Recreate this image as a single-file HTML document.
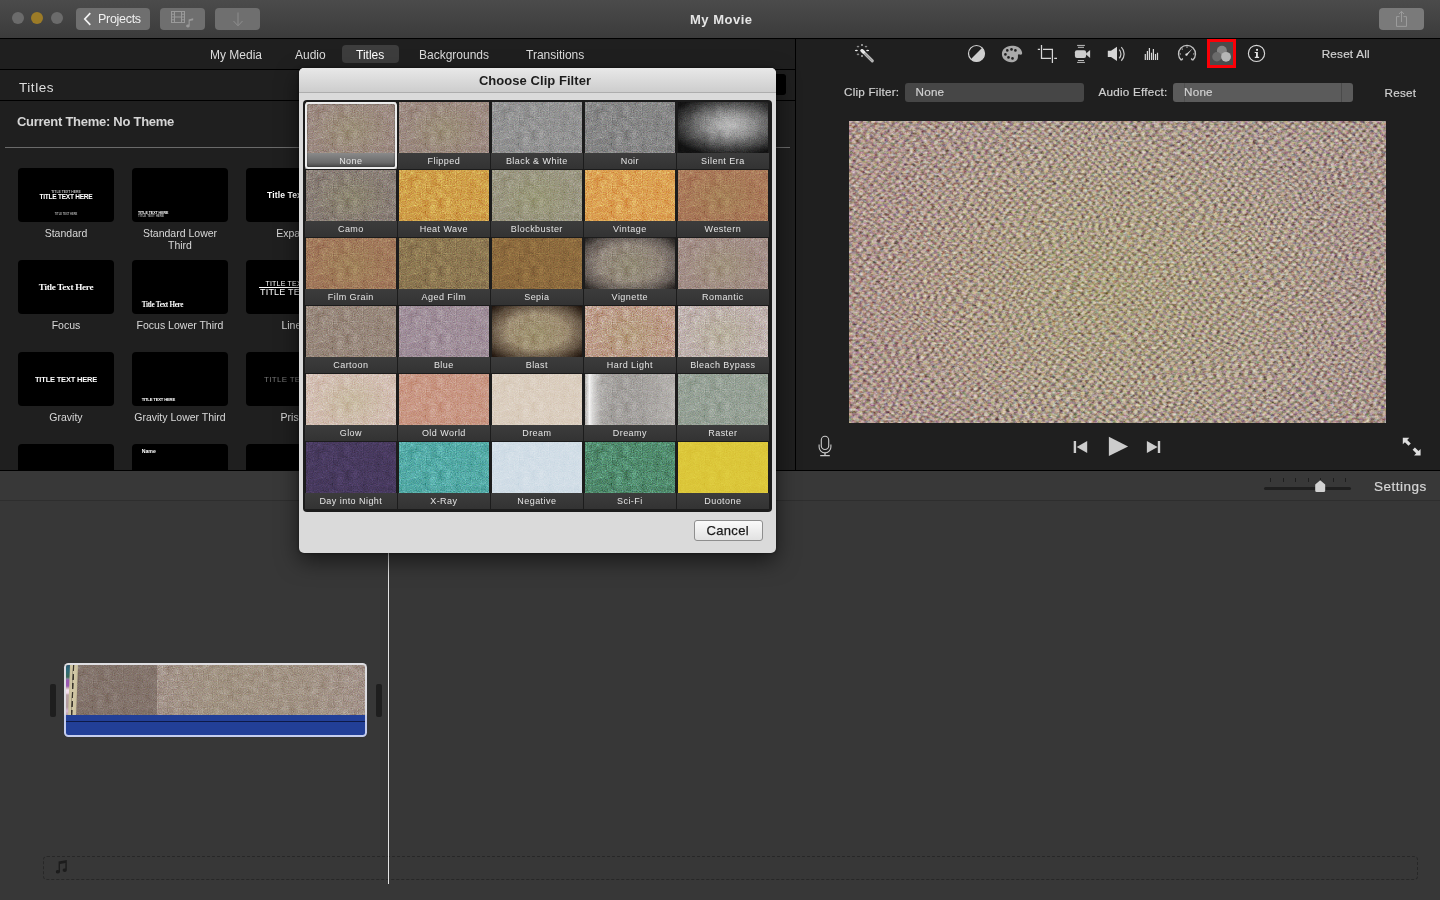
<!DOCTYPE html>
<html><head><meta charset="utf-8">
<style>
*{box-sizing:border-box;margin:0;padding:0}
html,body{width:1440px;height:900px;overflow:hidden;background:#373737;font-family:"Liberation Sans",sans-serif;}
.abs{position:absolute}
#titlebar{left:0;top:0;width:1440px;height:38px;background:linear-gradient(#4b4b4b,#3b3b3b);}
.hl{left:0;height:1px;background:#000}
.tl{border-radius:50%;width:12px;height:12px;top:12px;background:#6b6b6b}
.tbtn{top:8px;height:22px;background:#6f6f6f;border-radius:4px}
#upper{left:0;top:39px;width:1440px;height:431px;background:#1f1f1f}
.tab{top:48px;font-size:12px;color:#dcdcdc;white-space:nowrap}
.lbl{font-size:10.5px;color:#d8d8d8;text-align:center;line-height:12px;white-space:nowrap}
.thumb{width:96px;height:54px;background:#000;border-radius:4px;overflow:hidden}
.thumb span{position:absolute;color:#fff;white-space:nowrap;line-height:1}
.vt{font-size:11.700px;color:#d0d0d0;white-space:nowrap;letter-spacing:.22px;-webkit-text-stroke:.2px #d0d0d0;margin-top:-1.300px}
svg{position:absolute;overflow:visible}
/* dialog */
#dlg{left:299px;top:68px;width:477px;height:485px;background:#dadada;border-radius:5px;box-shadow:0 8px 22px rgba(0,0,0,.55),0 0 3px rgba(0,0,0,.5);}
#dlghead{left:0;top:0;width:477px;height:25px;border-radius:5px 5px 0 0;background:linear-gradient(#e8e8e8,#cdcdcd);border-bottom:1px solid #adadad}
#dlgtitle{left:0;top:5px;width:472px;text-align:center;font-size:13px;font-weight:bold;color:#1c1c1c;letter-spacing:.05px}
#grid{left:4px;top:32px;width:469px;height:412px;background:#1c1c1c;border-radius:4px}
.cell{position:absolute;width:91.700px;height:67px}
.im{position:absolute;left:.600px;top:0;width:90.400px;height:51px;overflow:hidden}
.tx{position:absolute;left:0;top:0;width:100%;height:100%;filter:url(#fabS);mix-blend-mode:overlay}
#vtx{filter:url(#fab);mix-blend-mode:overlay}
.txh{filter:url(#fabH)}
.ov{position:absolute;left:0;top:0;width:100%;height:100%}
.cl{will-change:transform;position:absolute;left:0;top:51px;width:91.700px;height:16px;background:linear-gradient(#3c3c3c,#333);text-align:center;font-size:9px;color:#e4e4e4;letter-spacing:.45px;line-height:16.5px;white-space:nowrap}
.cell.sel{outline:none}
.cell.sel .cl{background:linear-gradient(#8a8a8a 0%,#6a6a6a 60%,#4a4a4a 85%,#777 100%)}
.cell.sel:after{content:"";box-sizing:border-box;position:absolute;left:-0.5px;top:0;width:92px;height:66.5px;border:2px solid #ececec;border-radius:3.5px;box-shadow:inset 0 0 1.5px #222;z-index:3}
#cancel{left:395px;top:452px;width:69px;height:21px;border:1px solid #8e8e8e;border-radius:3px;background:linear-gradient(#fafafa,#e2e2e2);font-size:13px;color:#1a1a1a;text-align:center;line-height:19px;letter-spacing:.3px;padding-right:1.500px;-webkit-text-stroke:.25px #1a1a1a}
</style></head><body>

<svg width="0" height="0" style="position:absolute">
<defs>
<filter id="fab" x="0" y="0" width="100%" height="100%" color-interpolation-filters="sRGB">
  <feTurbulence type="fractalNoise" baseFrequency="0.28 0.42" numOctaves="2" seed="7"/>
  <feColorMatrix type="matrix" values="0.62 0.29 0.29 0 -0.1  0.29 0.62 0.29 0 -0.1  0.29 0.29 0.62 0 -0.1  0 0 0 0 1"/>
</filter>
<filter id="fabS" x="0" y="0" width="100%" height="100%" color-interpolation-filters="sRGB">
  <feTurbulence type="fractalNoise" baseFrequency="0.8 0.85" numOctaves="1" seed="11" result="a"/>
  <feTurbulence type="fractalNoise" baseFrequency="0.13 0.16" numOctaves="2" seed="5" result="b0"/><feColorMatrix in="b0" type="matrix" values="0.34 0.33 0.33 0 0 0.34 0.33 0.33 0 0 0.34 0.33 0.33 0 0 0 0 0 0 1" result="b"/>
  <feComposite in="a" in2="b" operator="arithmetic" k1="0" k2="0.8" k3="0.2" k4="0"/>
  <feColorMatrix type="matrix" values="0.5 0.25 0.25 0 0  0.25 0.5 0.25 0 0  0.25 0.25 0.5 0 0  0 0 0 0 1"/>
</filter>
<filter id="fabH" x="0" y="0" width="100%" height="100%" color-interpolation-filters="sRGB">
  <feTurbulence type="fractalNoise" baseFrequency="0.8 0.85" numOctaves="1" seed="11" result="a"/>
  <feTurbulence type="fractalNoise" baseFrequency="0.13 0.16" numOctaves="2" seed="5" result="b0"/><feColorMatrix in="b0" type="matrix" values="0.34 0.33 0.33 0 0 0.34 0.33 0.33 0 0 0.34 0.33 0.33 0 0 0 0 0 0 1" result="b"/>
  <feComposite in="a" in2="b" operator="arithmetic" k1="0" k2="0.8" k3="0.2" k4="0"/>
  <feColorMatrix type="matrix" values="0.9 0.4 0.4 0 -0.35  0.4 0.9 0.4 0 -0.35  0.4 0.4 0.9 0 -0.35  0 0 0 0 1"/>
</filter>
<filter id="soft" x="0" y="0" width="100%" height="100%"><feTurbulence type="fractalNoise" baseFrequency="0.012 0.02" numOctaves="2" seed="4" result="w"/><feDisplacementMap in="SourceGraphic" in2="w" scale="26" xChannelSelector="R" yChannelSelector="G" result="d"/><feGaussianBlur in="d" stdDeviation="0.75"/></filter>
<pattern id="weave" width="8.6" height="9.4" patternUnits="userSpaceOnUse" patternTransform="rotate(-3)">
  <rect width="8.6" height="9.4" fill="#a29285"/>
  <ellipse cx="2.15" cy="2.35" rx="2.2" ry="1.9" fill="#cdbea2"/>
  <ellipse cx="6.45" cy="7.05" rx="2.2" ry="1.9" fill="#cdbea2"/>
  <ellipse cx="6.45" cy="2.35" rx="1.7" ry="1.4" fill="#83756f"/>
  <ellipse cx="2.15" cy="7.05" rx="1.7" ry="1.4" fill="#83756f"/>
</pattern>
</defs></svg>
<!-- TITLE BAR -->
<div id="titlebar" class="abs"></div>
<div class="abs hl" style="top:38px;width:1440px"></div>
<div class="abs tl" style="left:12px"></div>
<div class="abs tl" style="left:31px;background:#9c7b27"></div>
<div class="abs tl" style="left:51px"></div>
<div class="abs tbtn" style="left:76px;width:74px"></div>
<div class="abs tbtn" style="left:160px;width:45px"></div>
<div class="abs tbtn" style="left:215px;width:45px"></div>
<div class="abs tbtn" style="left:1379px;width:45px;background:#7a7a7a"></div>
<svg class="abs" style="left:83px;top:12px" width="10" height="14" viewBox="0 0 10 14"><path d="M7.3 1.2 L1.8 7 L7.3 12.8" fill="none" stroke="#f2f2f2" stroke-width="1.7"/></svg>
<div class="abs" id="projects" style="left:98px;top:12px;font-size:12.5px;color:#f0f0f0;letter-spacing:-.3px">Projects</div>
<!-- film+note icon -->
<svg class="abs" style="left:170px;top:10px" width="26" height="20" viewBox="0 0 26 20"><g fill="none" stroke="#9a9a9a" stroke-width="1"><rect x="1.5" y="1.5" width="13" height="11"/><path d="M4.5 1.5V12.5M11.5 1.5V12.5M4.5 7H11.5M1.5 4.2H4.5M1.5 7H4.5M1.5 9.8H4.5M11.5 4.2H14.5M11.5 7H14.5M11.5 9.8H14.5"/></g><path d="M18.6 9.5 L23.2 8.3 V10.2 L19.7 11.1 V16 a1.8 1.5 0 1 1 -1.1 -1.4 Z" fill="#9a9a9a"/></svg>
<!-- down arrow -->
<svg class="abs" style="left:232px;top:12px" width="12" height="16" viewBox="0 0 12 16"><path d="M6 0.5V13.5M1.5 9L6 13.8L10.5 9" fill="none" stroke="#8e8e8e" stroke-width="1"/></svg>
<!-- share -->
<svg class="abs" style="left:1394px;top:10px" width="16" height="18" viewBox="0 0 16 18"><path d="M5.5 6.6H2.5V16.4H12.5V6.6H9.5M7.5 12V1.5M5 4L7.5 1.3L10 4" fill="none" stroke="#9c9c9c" stroke-width="1"/></svg>
<div class="abs" id="mymovie" style="left:690px;top:12px;font-size:13px;font-weight:bold;color:#e6e6e6;white-space:nowrap;letter-spacing:.5px">My Movie</div>

<!-- UPPER -->
<div id="upper" class="abs"></div>
<div class="abs hl" style="top:470px;width:1440px"></div>
<div class="abs hl" style="top:69px;width:795px"></div>
<div class="abs hl" style="top:100px;width:795px"></div>
<div class="abs" style="left:795px;top:39px;width:1px;height:431px;background:#000"></div>
<div class="abs" style="left:342px;top:45px;width:57px;height:18px;border-radius:4px;background:#3d3d3d"></div>
<div class="abs tab" id="t1" style="left:210px">My Media</div>
<div class="abs tab" id="t2" style="left:295px">Audio</div>
<div class="abs tab" id="t3" style="left:356px;color:#fff">Titles</div>
<div class="abs tab" id="t4" style="left:419px">Backgrounds</div>
<div class="abs tab" id="t5" style="left:526px">Transitions</div>
<div class="abs" id="titlesH" style="left:19px;top:80px;font-size:13.5px;color:#dedede;letter-spacing:.55px">Titles</div>
<div class="abs" style="left:700px;top:74px;width:86px;height:21px;background:#000;border-radius:3px"></div>
<div class="abs" id="curtheme" style="left:17px;top:114px;font-size:13px;font-weight:bold;color:#d6d6d6;white-space:nowrap;letter-spacing:-.27px">Current Theme: No Theme</div>
<div class="abs" style="left:5px;top:147px;width:785px;height:1px;background:#6a6a6a"></div>
<div class="abs thumb" style="left:18px;top:168px"><span style="left:0;width:96px;text-align:center;top:23.1px;font-size:3.4px;font-weight:bold;color:#bbb">TITLE TEXT HERE</span><span style="left:0;width:96px;text-align:center;top:26.1px;font-size:6.6px;font-weight:bold;letter-spacing:-.28px">TITLE TEXT HERE</span><span style="left:0;width:96px;text-align:center;top:46px;font-size:2.6px;font-weight:bold;color:#aaa">TITLE TEXT HERE</span></div>
<div class="abs lbl" style="left:6px;top:227px;width:120px">Standard</div>
<div class="abs thumb" style="left:132px;top:168px"><span style="left:6px;top:43.5px;font-size:3.5px;font-weight:bold">TITLE TEXT HERE</span><span style="left:6px;top:46.6px;font-size:3px;font-weight:bold;color:#aaa">TITLE TEXT HERE</span></div>
<div class="abs lbl" style="left:120px;top:227px;width:120px">Standard Lower<br>Third</div>
<div class="abs thumb" style="left:246px;top:168px"><span style="left:21px;top:23px;font-size:8.6px;font-weight:bold;letter-spacing:.1px">Title Text Here</span></div>
<div class="abs lbl" style="left:234px;top:227px;width:120px">Expand</div>
<div class="abs thumb" style="left:18px;top:260px"><span style="left:0;width:96px;text-align:center;top:22.6px;font-size:9.2px;font-weight:bold;font-family:'Liberation Serif',serif;letter-spacing:-.3px">Title Text Here</span></div>
<div class="abs lbl" style="left:6px;top:319px;width:120px">Focus</div>
<div class="abs thumb" style="left:132px;top:260px"><span style="left:9.7px;top:42.2px;font-size:7.2px;font-weight:bold;font-family:'Liberation Serif',serif;letter-spacing:-.3px">Title Text Here</span></div>
<div class="abs lbl" style="left:120px;top:319px;width:120px">Focus Lower Third</div>
<div class="abs thumb" style="left:246px;top:260px"><span style="left:19.5px;top:19.7px;font-size:7px;letter-spacing:.2px">TITLE TEXT HERE</span><span style="left:13px;top:27px;width:80px;height:1px;background:#fff"></span><span style="left:14px;top:27.6px;font-size:9px;letter-spacing:.2px">TITLE TEXT HERE</span></div>
<div class="abs lbl" style="left:234px;top:319px;width:120px">Lines</div>
<div class="abs thumb" style="left:18px;top:352px"><span style="left:0;width:96px;text-align:center;top:24.3px;font-size:7.5px;font-weight:bold;letter-spacing:-.2px">TITLE TEXT HERE</span></div>
<div class="abs lbl" style="left:6px;top:411px;width:120px">Gravity</div>
<div class="abs thumb" style="left:132px;top:352px"><span style="left:9.7px;top:45.6px;font-size:4.2px;font-weight:bold;letter-spacing:-.2px">TITLE TEXT HERE</span></div>
<div class="abs lbl" style="left:120px;top:411px;width:120px">Gravity Lower Third</div>
<div class="abs thumb" style="left:246px;top:352px"><span style="left:18px;top:23.5px;font-size:8px;color:#777;letter-spacing:.3px">TITLE TEXT HERE</span></div>
<div class="abs lbl" style="left:234px;top:411px;width:120px">Prism</div>
<div class="abs thumb" style="left:18px;top:444px"></div>
<div class="abs thumb" style="left:132px;top:444px"><span style="left:9.7px;top:5px;font-size:5.2px;font-weight:bold">Name</span></div>
<div class="abs thumb" style="left:246px;top:444px"></div>
<!-- gray strip that covers bottom of left panel -->

<!-- VIEWER -->
<div class="abs vt" id="cf" style="left:844px;top:86px">Clip Filter:</div>
<div class="abs" style="left:905px;top:83px;width:179px;height:19px;background:#464646;border-radius:3px"></div>
<div class="abs vt" style="left:915.5px;top:86px">None</div>
<div class="abs vt" id="ae" style="left:1098.5px;top:86px">Audio Effect:</div>
<div class="abs" style="left:1173px;top:83px;width:180px;height:19px;background:#5b5b5b;border-radius:3px"></div>
<div class="abs" style="left:1184px;top:83px;width:1px;height:19px;background:#505050"></div>
<div class="abs" style="left:1341px;top:83px;width:1px;height:19px;background:#4a4a4a"></div>
<div class="abs vt" style="left:1184px;top:86px">None</div>
<div class="abs vt" id="rst" style="left:1384.5px;top:87px">Reset</div>
<div class="abs vt" id="rsta" style="left:1321.7px;top:48px">Reset All</div>
<div class="abs" id="video" style="left:849px;top:121px;width:537px;height:302px;background:#a4948d;overflow:hidden"><svg width="537" height="302" style="left:0;top:0"><rect x="-30" y="-30" width="600" height="370" fill="url(#weave)" filter="url(#soft)"/></svg><div class="ov" style="background:linear-gradient(90deg,rgba(185,120,125,.13),rgba(185,120,125,0) 38%,rgba(0,0,0,0) 75%,rgba(170,125,130,.08)),radial-gradient(ellipse 45% 60% at 48% 55%,rgba(170,165,110,.35),rgba(170,150,130,.1) 70%,rgba(150,120,150,.12))"></div><div class="tx" id="vtx"></div></div>


<!-- VIEWER TOOLBAR ICONS -->
<!-- wand -->
<svg class="abs" style="left:850px;top:40px" width="30" height="28" viewBox="0 0 30 28"><path d="M12 10.600L22.300 20.900" stroke="#b8b8b8" stroke-width="3.100" stroke-linecap="round"/><path d="M12 10.600L13.600 12.200" stroke="#e8e8e8" stroke-width="3.100" stroke-linecap="round"/><path d="M14.500 13.300L21.800 20.600" stroke="#8a8a8a" stroke-width="0.800"/><g fill="#8c8c8c"><rect x="11" y="4" width="2" height="2"/><rect x="11" y="15" width="2" height="2"/><ellipse cx="8" cy="6.600" rx="1.300" ry=".800"/><ellipse cx="16" cy="6.600" rx="1.300" ry=".800"/><ellipse cx="8" cy="14.400" rx="1.300" ry=".800"/></g><g fill="#ececec"><ellipse cx="6.400" cy="10.500" rx="1.500" ry=".700"/><ellipse cx="17.600" cy="10.500" rx="1.500" ry=".700"/></g></svg>
<!-- contrast -->
<svg class="abs" style="left:967px;top:44px" width="19" height="19" viewBox="0 0 19 19"><circle cx="9.5" cy="9.5" r="8" fill="none" stroke="#d2d2d2" stroke-width="1.2"/><path d="M15.2 3.8A8 8 0 0 1 3.8 15.2Z" fill="#cfcfcf"/></svg>
<!-- palette -->
<svg class="abs" style="left:1000px;top:40px" width="24" height="26" viewBox="0 0 24 26"><path d="M11.800 5.700C6 5.700 1.900 9.300 1.900 14c0 4.700 4.300 8.200 9.300 8.200 3.800 0 6.400-1.800 6.700-4.800.2-1.700-.3-2.500.4-3 .8-.5 1.900.6 3 .2 1-.4 1-1.600.6-2.900C20.700 7.800 16.800 5.700 11.800 5.700z" fill="#a9a9a9"/><g fill="#1f1f1f"><circle cx="7.300" cy="10.400" r="1.300"/><circle cx="11.500" cy="9.400" r="1.300"/><circle cx="15.400" cy="10.400" r="1.300"/><circle cx="5.400" cy="14.400" r="1.300"/><circle cx="8.500" cy="17.400" r="1.300"/><circle cx="12.500" cy="18.400" r="1.300"/></g></svg>
<!-- crop -->
<svg class="abs" style="left:1036px;top:40px" width="24" height="26" viewBox="0 0 24 26"><path d="M5.500 4.900V18.400H15M1.800 9.400H4M7 9.400H16.400V22.900M18.200 18.400H21" fill="none" stroke="#d6d6d6" stroke-width="1.250"/></svg>
<!-- camera stabilise -->
<svg class="abs" style="left:1072px;top:40px" width="22" height="26" viewBox="0 0 22 26"><g fill="#cdcdcd"><rect x="2.900" y="10.300" width="11.200" height="7.600" rx="2"/><path d="M13.500 14.100L18.100 10V18.100Z"/></g><g fill="#bdbdbd"><rect x="5.100" y="4.900" width="7.800" height="1"/><rect x="5.900" y="6.800" width="6.100" height="1"/><rect x="5.900" y="20" width="6.100" height="1"/><rect x="5.100" y="21.900" width="7.800" height="1"/></g></svg>
<!-- speaker -->
<svg class="abs" style="left:1100px;top:40px" width="30" height="28" viewBox="0 0 30 28"><path d="M7.800 10.800H11L17 6.700V21L11 17H7.800Z" fill="#d4d4d4"/><path d="M19.200 9.600A6.200 6.200 0 0 1 19.200 18.200M21.300 7.100A9.600 9.600 0 0 1 21.300 20.700" fill="none" stroke="#c6c6c6" stroke-width="1.250"/></svg>
<!-- eq -->
<svg class="abs" style="left:1140px;top:40px" width="22" height="28" viewBox="0 0 22 28"><path d="M5.3 20V13.9M7.4 20V11.1M9.4 20V8.0M11.5 20V12.8M13.4 20V8.9M15.5 20V13.9M17.5 20V12.8" stroke="#d8d8d8" stroke-width="1.200" fill="none"/></svg>
<!-- speedometer -->
<svg class="abs" style="left:1170px;top:40px" width="34" height="28" viewBox="0 0 34 28"><path d="M11.31 20.22A8.5 8.5 0 1 1 22.69 20.22" fill="none" stroke="#c4c4c4" stroke-width="1.300"/><path d="M11.31 20.22L12.78 18.58M22.69 20.22L21.22 18.58" stroke="#c4c4c4" stroke-width="1.400" fill="none"/><path d="M15.700 14.500L16.900 15.400L22.600 8.500Z" fill="#e0e0e0"/><circle cx="16.400" cy="14.700" r="1.100" fill="#e0e0e0"/><g fill="#b0b0b0"><rect x="16.300" y="6.400" width="1.400" height="1.300"/><rect x="9.600" y="13.300" width="1.300" height="1.300"/><rect x="23.200" y="13.300" width="1.300" height="1.300"/><rect x="11.700" y="8.500" width="1.200" height="1.200"/></g></svg>
<!-- filter (highlighted) -->
<div class="abs" style="left:1207px;top:39px;width:29px;height:29px;background:#4b4b4b;border:3px solid #fb0007"></div>
<svg class="abs" style="left:1200px;top:36px" width="40" height="36" viewBox="0 0 40 36"><circle cx="21.900" cy="14.800" r="5" fill="#848484"/><circle cx="16.900" cy="20.800" r="4.700" fill="#6b6b6b"/><circle cx="26" cy="20.800" r="4.900" fill="#b6b6b6"/></svg>
<!-- info -->
<svg class="abs" style="left:1240px;top:36px" width="34" height="36" viewBox="0 0 34 36"><circle cx="16.500" cy="17.400" r="8.100" fill="none" stroke="#d8d8d8" stroke-width="1.150"/><g fill="#e2e2e2"><rect x="16.100" y="12.900" width="1.900" height="1.900"/><path d="M14.700 15.900H17.900V20.800H19.100V21.900H14.800V20.800H16V17H14.700Z"/></g></svg>

<!-- PLAYER CONTROLS -->
<svg class="abs" style="left:1070px;top:434px" width="96" height="26" viewBox="0 0 96 26"><g fill="#cccccc"><rect x="3.700" y="7" width="2.400" height="12"/><path d="M6.700 13L17.200 7V19Z"/><path d="M38.900 2.700L58.100 12.400L38.900 22.100Z"/><path d="M76.900 7L87.600 13L76.900 19Z"/><rect x="87.800" y="7" width="2.400" height="12"/></g></svg>
<!-- mic -->
<svg class="abs" style="left:816px;top:434px" width="18" height="24" viewBox="0 0 18 24"><g fill="none" stroke="#c8c8c8" stroke-width="1.100"><rect x="5.300" y="2.300" width="7.400" height="13.200" rx="3.700"/><path d="M3.100 10.500V13A5.900 5.900 0 0 0 14.900 13V10.500"/><path d="M9 18.900V21.300M4.200 21.600H13.800" stroke-width="1.300"/></g></svg>
<!-- expand -->
<svg class="abs" style="left:1402px;top:437px" width="20" height="20" viewBox="0 0 20 20"><g fill="#dedede" stroke="none"><path d="M0.800 0.800H7.300L5.200 2.900L8.800 6.500L6.500 8.800L2.900 5.200L0.800 7.300Z"/><path d="M18.600 18.400H12.100L14.200 16.300L10.600 12.700L12.900 10.400L16.500 14L18.600 11.900Z"/></g></svg>
<!-- TIMELINE -->
<div class="abs" style="left:0;top:471px;width:1440px;height:29px;background:#383838"></div>
<div class="abs" style="left:0;top:500px;width:1440px;height:1px;background:#2e2e2e"></div>
<div class="abs" id="settings" style="left:1374px;top:479px;font-size:13.5px;color:#d6d6d6;letter-spacing:.5px;-webkit-text-stroke:.2px #d6d6d6">Settings</div>


<!-- slider -->
<div class="abs" style="left:1264px;top:487px;width:87px;height:3px;border-radius:1.500px;background:#1f1f1f"></div>
<svg class="abs" style="left:1264px;top:477px" width="90" height="16" viewBox="0 0 90 16"><path d="M6.500 1V5M19.500 1V5M31.500 1V5M44.500 1V5M56.500 1V5M69.500 1V5M81.500 1V5" stroke="#1f1f1f" stroke-width="1"/><path d="M56.200 3.200L61.200 7.500V13.500A1.500 1.500 0 0 1 59.700 15H52.700A1.500 1.500 0 0 1 51.200 13.500V7.500Z" fill="#d2d2d2"/></svg>
<!-- clip -->
<div class="abs" style="left:50px;top:684px;width:6px;height:33px;border-radius:2px;background:#1e1e1e"></div>
<div class="abs" style="left:376px;top:684px;width:6px;height:33px;border-radius:2px;background:#1e1e1e"></div>
<div class="abs" id="clip" style="left:64px;top:663px;width:303px;height:74px;border-radius:4.500px;background:linear-gradient(#dedee2 0,#dcdce2 68%,#c2caea 72%,#c6ceee 100%);overflow:hidden">
 <div class="abs" style="left:2px;top:2px;width:299px;height:50px;background:#a3938a;overflow:hidden;border-radius:2px 2px 0 0"><div class="tx"></div>
  <div class="ov" style="background:linear-gradient(90deg,rgba(0,0,0,0) 30%,rgba(150,150,90,.14) 50%,rgba(150,150,90,.1) 80%,rgba(0,0,0,0))"></div>
  <div class="abs" style="left:0;top:0;width:91px;height:51px;background:rgba(60,45,40,.3)"></div>
  <div class="abs" style="left:0;top:0;width:4px;height:51px;background:linear-gradient(#2c5a70 0,#2f6a78 6px,#3a6a58 12px,#8a80a0 14px,#9858b0 15px,#9a5ab2 21px,#c8a8b8 23px,#f4e4f0 25px,#f0d8e8 28px,#b8a0a4 30px,#b09a9c 42px,#d8b8d8 46px,#b8a0a0 50px)"></div>
  <div class="abs" style="left:3px;top:-3px;width:8px;height:58px;background:linear-gradient(90deg,#c9bf9c 0,#d2c8a6 2.500px,#3a352c 3.200px,#3a352c 4px,#d2c8a6 4.700px,#c9bf9c 100%);transform:rotate(2.200deg);transform-origin:50% 50%"></div>
  <div class="abs" style="left:5.500px;top:-3px;width:2.500px;height:58px;background:repeating-linear-gradient(#d0c6a4 0,#d0c6a4 3px,rgba(0,0,0,0) 3px,rgba(0,0,0,0) 9px);transform:rotate(2.200deg);transform-origin:50% 50%"></div>
 </div>
 <div class="abs" style="left:2px;top:52px;width:299px;height:20px;background:#223f97;border-radius:0 0 2.500px 2.500px"></div>
 <div class="abs" style="left:2px;top:58px;width:299px;height:1px;background:#0e1a48"></div>
</div>
<!-- music track -->
<div class="abs" style="left:43px;top:856px;width:1375px;height:24px;border:1px dashed #272727;border-radius:4px"></div>
<svg class="abs" style="left:54px;top:859px" width="15" height="16" viewBox="0 0 15 16"><path d="M4.600 2.600L12.800 1V11.200A2.100 1.700 0 1 1 11.400 9.600V4L6 5.100V12.800A2.100 1.700 0 1 1 4.600 11.200Z" fill="#1c1c1c"/></svg>
<!-- playhead -->
<div class="abs" style="left:388px;top:540px;width:1px;height:344px;background:#e4e4e4"></div>
<!-- DIALOG -->
<div class="abs" id="dlg">
 <div class="abs" id="dlghead"></div>
 <div class="abs" id="dlgtitle">Choose Clip Filter</div>
 <div class="abs" id="grid">
<div class="cell sel" style="left:2.1999999999999886px;top:2px"><div class="im" style="background-color:#9d8b82"><div class="tx" style="opacity:0.95"></div><div class="ov" style="background:radial-gradient(ellipse 45% 55% at 50% 55%,rgba(150,160,80,.2),rgba(150,160,80,0) 100%)"></div></div><div class="cl"><span>None</span></div></div>
<div class="cell" style="left:95.19999999999999px;top:2px"><div class="im" style="background-color:#9d8b82"><div class="tx" style="opacity:0.95"></div><div class="ov" style="background:radial-gradient(ellipse 45% 55% at 50% 55%,rgba(150,160,80,.2),rgba(150,160,80,0) 100%)"></div></div><div class="cl"><span>Flipped</span></div></div>
<div class="cell" style="left:188.2px;top:2px"><div class="im" style="background-color:#939393"><div class="tx" style="opacity:0.95"></div></div><div class="cl"><span>Black & White</span></div></div>
<div class="cell" style="left:281.20000000000005px;top:2px"><div class="im" style="background-color:#878787"><div class="tx" style="opacity:0.95"></div></div><div class="cl"><span>Noir</span></div></div>
<div class="cell" style="left:374.20000000000005px;top:2px"><div class="im" style="background-color:#7c7c7c"><div class="tx" style="opacity:0.95"></div><div class="ov" style="background:radial-gradient(ellipse 70% 62% at 58% 45%,rgba(255,255,255,.5) 0%,rgba(220,220,220,.25) 35%,rgba(0,0,0,.45) 75%,rgba(0,0,0,.85) 100%)"></div></div><div class="cl"><span>Silent Era</span></div></div>
<div class="cell" style="left:2.1999999999999886px;top:70px"><div class="im" style="background-color:#8a7f77"><div class="tx" style="opacity:0.95"></div><div class="ov" style="background:radial-gradient(ellipse 45% 55% at 50% 55%,rgba(150,160,80,.2),rgba(150,160,80,0) 100%)"></div></div><div class="cl"><span>Camo</span></div></div>
<div class="cell" style="left:95.19999999999999px;top:70px"><div class="im" style="background-color:#d0a04a"><div class="tx txh" style="opacity:0.95"></div></div><div class="cl"><span>Heat Wave</span></div></div>
<div class="cell" style="left:188.2px;top:70px"><div class="im" style="background-color:#9b9782"><div class="tx" style="opacity:0.95"></div><div class="ov" style="background:radial-gradient(ellipse 45% 55% at 50% 55%,rgba(150,160,80,.2),rgba(150,160,80,0) 100%)"></div></div><div class="cl"><span>Blockbuster</span></div></div>
<div class="cell" style="left:281.20000000000005px;top:70px"><div class="im" style="background-color:#dca254"><div class="tx txh" style="opacity:0.95"></div></div><div class="cl"><span>Vintage</span></div></div>
<div class="cell" style="left:374.20000000000005px;top:70px"><div class="im" style="background-color:#aa7a5a"><div class="tx" style="opacity:0.95"></div><div class="ov" style="background:radial-gradient(ellipse 45% 55% at 50% 55%,rgba(150,160,80,.2),rgba(150,160,80,0) 100%)"></div></div><div class="cl"><span>Western</span></div></div>
<div class="cell" style="left:2.1999999999999886px;top:138px"><div class="im" style="background-color:#a27a5c"><div class="tx" style="opacity:0.95"></div><div class="ov" style="background:radial-gradient(ellipse 45% 55% at 50% 55%,rgba(150,160,80,.2),rgba(150,160,80,0) 100%)"></div></div><div class="cl"><span>Film Grain</span></div></div>
<div class="cell" style="left:95.19999999999999px;top:138px"><div class="im" style="background-color:#8d7852"><div class="tx" style="opacity:0.95"></div></div><div class="cl"><span>Aged Film</span></div></div>
<div class="cell" style="left:188.2px;top:138px"><div class="im" style="background-color:#8d6b3e"><div class="tx" style="opacity:0.8"></div></div><div class="cl"><span>Sepia</span></div></div>
<div class="cell" style="left:281.20000000000005px;top:138px"><div class="im" style="background-color:#92867e"><div class="tx" style="opacity:0.95"></div><div class="ov" style="background:radial-gradient(ellipse 45% 55% at 50% 55%,rgba(150,160,80,.2),rgba(150,160,80,0) 100%)"></div><div class="ov" style="background:radial-gradient(ellipse 70% 72% at 50% 50%,rgba(0,0,0,0) 50%,rgba(0,0,0,.3) 76%,rgba(0,0,0,.8) 100%)"></div></div><div class="cl"><span>Vignette</span></div></div>
<div class="cell" style="left:374.20000000000005px;top:138px"><div class="im" style="background-color:#a38f88"><div class="tx" style="opacity:0.95"></div><div class="ov" style="background:radial-gradient(ellipse 45% 55% at 50% 55%,rgba(150,160,80,.2),rgba(150,160,80,0) 100%)"></div></div><div class="cl"><span>Romantic</span></div></div>
<div class="cell" style="left:2.1999999999999886px;top:206px"><div class="im" style="background-color:#98887c"><div class="tx" style="opacity:0.95"></div></div><div class="cl"><span>Cartoon</span></div></div>
<div class="cell" style="left:95.19999999999999px;top:206px"><div class="im" style="background-color:#a08f9a"><div class="tx" style="opacity:0.95"></div></div><div class="cl"><span>Blue</span></div></div>
<div class="cell" style="left:188.2px;top:206px"><div class="im" style="background-color:#a08e76"><div class="tx" style="opacity:0.95"></div><div class="ov" style="background:radial-gradient(ellipse 45% 55% at 50% 55%,rgba(150,160,80,.2),rgba(150,160,80,0) 100%)"></div><div class="ov" style="background:radial-gradient(ellipse 68% 70% at 50% 50%,rgba(0,0,0,0) 48%,rgba(20,8,0,.4) 74%,rgba(15,5,0,.88) 100%)"></div></div><div class="cl"><span>Blast</span></div></div>
<div class="cell" style="left:281.20000000000005px;top:206px"><div class="im" style="background-color:#be9e8c"><div class="tx txh" style="opacity:0.95"></div><div class="ov" style="background:radial-gradient(ellipse 45% 55% at 50% 55%,rgba(150,160,80,.2),rgba(150,160,80,0) 100%)"></div></div><div class="cl"><span>Hard Light</span></div></div>
<div class="cell" style="left:374.20000000000005px;top:206px"><div class="im" style="background-color:#c0b3af"><div class="tx txh" style="opacity:0.95"></div><div class="ov" style="background:radial-gradient(ellipse 45% 55% at 50% 55%,rgba(150,160,80,.2),rgba(150,160,80,0) 100%)"></div></div><div class="cl"><span>Bleach Bypass</span></div></div>
<div class="cell" style="left:2.1999999999999886px;top:274px"><div class="im" style="background-color:#d3bfb3"><div class="tx txh" style="opacity:0.8"></div><div class="ov" style="background:radial-gradient(ellipse 45% 55% at 50% 55%,rgba(150,160,80,.2),rgba(150,160,80,0) 100%)"></div></div><div class="cl"><span>Glow</span></div></div>
<div class="cell" style="left:95.19999999999999px;top:274px"><div class="im" style="background-color:#c99885"><div class="tx" style="opacity:0.95"></div></div><div class="cl"><span>Old World</span></div></div>
<div class="cell" style="left:188.2px;top:274px"><div class="im" style="background-color:#dbcebf"><div class="tx" style="opacity:0.95"></div></div><div class="cl"><span>Dream</span></div></div>
<div class="cell" style="left:281.20000000000005px;top:274px"><div class="im" style="background-color:#a3a09d"><div class="tx" style="opacity:0.95"></div><div class="ov" style="background:linear-gradient(90deg,rgba(255,255,255,.15) 0%,rgba(255,255,255,.85) 5%,rgba(255,255,255,.55) 9%,rgba(255,255,255,.12) 18%,rgba(255,255,255,0) 32%,rgba(255,255,255,0) 60%,rgba(255,250,245,.2) 100%)"></div></div><div class="cl"><span>Dreamy</span></div></div>
<div class="cell" style="left:374.20000000000005px;top:274px"><div class="im" style="background-color:#96a196"><div class="tx" style="opacity:0.95"></div></div><div class="cl"><span>Raster</span></div></div>
<div class="cell" style="left:2.1999999999999886px;top:342px"><div class="im" style="background-color:#483a5f"><div class="tx" style="opacity:0.85"></div></div><div class="cl"><span>Day into Night</span></div></div>
<div class="cell" style="left:95.19999999999999px;top:342px"><div class="im" style="background-color:#54aaa6"><div class="tx txh" style="opacity:0.8"></div></div><div class="cl"><span>X-Ray</span></div></div>
<div class="cell" style="left:188.2px;top:342px"><div class="im" style="background-color:#d2dee7"><div class="tx" style="opacity:0.85"></div></div><div class="cl"><span>Negative</span></div></div>
<div class="cell" style="left:281.20000000000005px;top:342px"><div class="im" style="background-color:#518b6e"><div class="tx txh" style="opacity:0.8"></div></div><div class="cl"><span>Sci-Fi</span></div></div>
<div class="cell" style="left:374.20000000000005px;top:342px"><div class="im" style="background-color:#dcc73a"><div class="tx" style="opacity:0.6"></div></div><div class="cl"><span>Duotone</span></div></div>
 </div>
 <div class="abs" id="cancel">Cancel</div>
</div>
</body></html>
